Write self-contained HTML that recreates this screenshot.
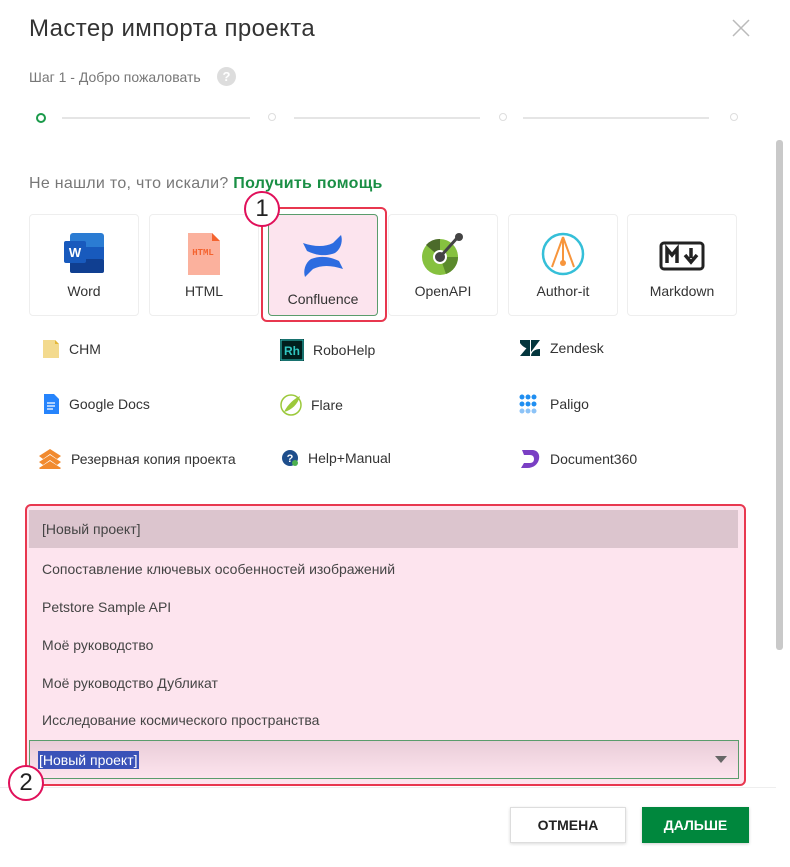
<!DOCTYPE html>
<html><head><meta charset="utf-8"><style>
body{margin:0;width:790px;height:867px;background:#fff;font-family:"Liberation Sans","Noto Sans CJK SC",sans-serif;color:#333;position:relative;overflow:hidden}
.a{position:absolute}
.tile{position:absolute;top:214px;width:110px;height:102px;border:1px solid #eee;border-radius:4px;box-sizing:border-box;text-align:center;font-size:14px;color:#333;background:#fff}
.tile .ic{position:absolute;left:0;right:0;top:16px;height:46px;display:flex;justify-content:center}
.tile .lb{position:absolute;left:0;right:0;top:68px}
.li{position:absolute;font-size:14px;color:#333;display:flex;align-items:center;gap:9px}
.row{position:absolute;left:29px;width:709px;height:38px;line-height:38px;padding-left:13px;box-sizing:border-box;font-size:14px;color:#444}
.circ{position:absolute;width:36px;height:36px;border:2px solid #e0105a;border-radius:50%;box-sizing:border-box;background:#fff;text-align:center;line-height:32px;font-size:24px;color:#222}
</style></head><body>
<div class="a" style="left:29px;top:15px;font-size:24px;color:#333;letter-spacing:0.4px">Мастер импорта проекта</div>
<svg class="a" style="left:732px;top:19px" width="18" height="18"><path d="M1 1L17 17M17 1L1 17" stroke="#bbb" stroke-width="1.5"/></svg>
<div class="a" style="left:29px;top:69px;font-size:14px;color:#777">Шаг 1 - Добро пожаловать</div>
<div class="a" style="left:217px;top:67px;width:19px;height:19px;border-radius:50%;background:#ddd;color:#fff;font-size:13px;text-align:center;line-height:19px;font-weight:bold">?</div>
<div class="a" style="left:36px;top:113px;width:6px;height:6px;border:2px solid #1a9a4a;border-radius:50%"></div>
<div class="a" style="left:62px;top:117px;width:188px;height:2px;background:#e5e5e5"></div>
<div class="a" style="left:268px;top:113px;width:6px;height:6px;border:1.5px solid #ddd;border-radius:50%"></div>
<div class="a" style="left:294px;top:117px;width:186px;height:2px;background:#e5e5e5"></div>
<div class="a" style="left:499px;top:113px;width:6px;height:6px;border:1.5px solid #ddd;border-radius:50%"></div>
<div class="a" style="left:523px;top:117px;width:186px;height:2px;background:#e5e5e5"></div>
<div class="a" style="left:730px;top:113px;width:6px;height:6px;border:1.5px solid #ddd;border-radius:50%"></div>
<div class="a" style="left:776px;top:140px;width:7px;height:510px;background:#c9c9c9;border-radius:3px"></div>
<div class="a" style="left:29px;top:175px;font-size:16px;color:#777;letter-spacing:0.3px">Не нашли то, что искали? <b style="color:#1a8f45">Получить помощь</b></div>

<div class="tile" style="left:29px"><div class="ic"><svg width="44" height="44" viewBox="0 0 44 44"><rect x="8" y="2" width="34" height="40" rx="3" fill="#2b7cd3"/><rect x="8" y="16" width="34" height="12" fill="#185abd"/><rect x="8" y="28" width="34" height="14" rx="2" fill="#103f91"/><rect x="2" y="10" width="22" height="22" rx="2" fill="#185abd"/><text x="13" y="26" font-size="13" font-weight="bold" fill="#fff" text-anchor="middle" font-family="Liberation Sans">W</text></svg></div><div class="lb">Word</div></div>
<div class="tile" style="left:149px"><div class="ic"><svg width="36" height="46" viewBox="0 0 36 46"><path d="M2 2h24l8 8v34H2z" fill="#fbb19d"/><path d="M26 2l8 8h-8z" fill="#f4632f"/><text x="17" y="24" font-size="9" font-weight="bold" fill="#f4632f" text-anchor="middle" font-family="Liberation Mono">HTML</text></svg></div><div class="lb">HTML</div></div>
<div class="a" style="left:261px;top:207px;width:126px;height:115px;border:2px solid #e8374f;border-radius:6px;box-sizing:border-box"></div>
<div class="tile" style="left:268px;background:#fce4ee;border-color:#5a9c6c"><div class="ic"><svg width="48" height="50" viewBox="0 0 48 50"><path d="M4 12c12 4 22 4 30 0l8-8c2 6 0 14-6 18-10 4-20 2-28-2z" fill="#2d6ce0"/><path d="M44 38c-12-4-22-4-30 0l-8 8c-2-6 0-14 6-18 10-4 20-2 28 2z" fill="#2d6ce0"/></svg></div><div class="lb" style="top:76px">Confluence</div></div>
<div class="tile" style="left:388px"><div class="ic"><svg width="46" height="46" viewBox="0 0 46 46"><circle cx="20" cy="26" r="18" fill="#86c13f"/><path d="M20 26L6 14A18 18 0 0 1 20 8z" fill="#4c6b2a"/><path d="M20 26L38 26A18 18 0 0 1 26 43z" fill="#5b8a2c"/><circle cx="20" cy="26" r="7" fill="#fff"/><path d="M20 26L38 6" stroke="#444" stroke-width="3"/><circle cx="39" cy="6" r="4" fill="#444"/><circle cx="20" cy="26" r="5" fill="#444"/></svg></div><div class="lb">OpenAPI</div></div>
<div class="tile" style="left:508px"><div class="ic"><svg width="46" height="46" viewBox="0 0 46 46"><circle cx="23" cy="23" r="20" fill="#fff" stroke="#35bfd8" stroke-width="2.5"/><path d="M23 6L12 36M23 6L34 36M23 6V32" stroke="#f7953c" stroke-width="2" fill="none"/><circle cx="23" cy="32" r="3" fill="#f7953c"/></svg></div><div class="lb">Author-it</div></div>
<div class="tile" style="left:627px"><div class="ic"><svg width="46" height="46" viewBox="0 0 46 46"><rect x="2" y="12" width="42" height="26" rx="3" fill="#fff" stroke="#222" stroke-width="3"/><path d="M8 32V18l5 6 5-6v14" stroke="#222" stroke-width="3.5" fill="none"/><path d="M32 17v10M26 24l6 7 6-7" stroke="#222" stroke-width="3.5" fill="none"/></svg></div><div class="lb">Markdown</div></div>

<div class="li" style="left:42px;top:339px"><svg width="18" height="20"><path d="M1 1h12l4 4v14H1z" fill="#f3da8e"/><path d="M13 1l4 4h-4z" fill="#e3b73a"/></svg>CHM</div>
<div class="li" style="left:42px;top:394px"><svg width="18" height="20"><path d="M2 0h10l5 5v15H2z" fill="#2684fc"/><path d="M5 9h8M5 12h8M5 15h6" stroke="#fff" stroke-width="1.3"/></svg>Google Docs</div>
<div class="li" style="left:38px;top:448px"><svg width="24" height="22"><path d="M12 1L23 8l-4 3-7-5-7 5-4-3z M12 7l11 7-4 3-7-5-7 5-4-3z M12 13l11 7-1 1h-20l-1-1z" fill="#f18a2e"/></svg>Резервная копия проекта</div>
<div class="li" style="left:280px;top:339px"><svg width="24" height="22"><rect width="24" height="22" fill="#001e1d"/><rect x="1" y="1" width="22" height="20" fill="none" stroke="#31c5c1"/><text x="12" y="16" font-size="12" font-weight="bold" fill="#31c5c1" text-anchor="middle" font-family="Liberation Sans">Rh</text></svg>RoboHelp</div>
<div class="li" style="left:280px;top:394px"><svg width="22" height="22"><circle cx="11" cy="11" r="10" fill="#fff" stroke="#9cc93b" stroke-width="1.5"/><path d="M4 18C8 10 14 5 20 2 18 10 12 16 4 18z" fill="#9cc93b"/></svg>Flare</div>
<div class="li" style="left:281px;top:449px"><svg width="18" height="18"><circle cx="9" cy="9" r="8" fill="#1e4e8c"/><text x="9" y="13" font-size="11" font-weight="bold" fill="#fff" text-anchor="middle">?</text><circle cx="14" cy="14" r="3" fill="#4caf50"/></svg>Help+Manual</div>
<div class="li" style="left:519px;top:339px"><svg width="22" height="18"><path d="M1 1h10v9C7 10 3 7 1 4z" fill="#03363d"/><path d="M11 17H1L11 5z" fill="#03363d"/><path d="M21 1H11l10 12z" fill="none"/><path d="M12 1h9L12 13z" fill="#03363d"/><path d="M12 17c0-4 4-7 9-7v7z" fill="#03363d"/></svg>Zendesk</div>
<div class="li" style="left:519px;top:394px"><svg width="22" height="20"><g fill="#1f8ef1"><circle cx="3" cy="3" r="2.5"/><circle cx="9" cy="3" r="2.5"/><circle cx="15" cy="3" r="2.5"/><circle cx="3" cy="10" r="2.5"/><circle cx="9" cy="10" r="2.5"/><circle cx="15" cy="10" r="2.5"/></g><g fill="#8cc3f7"><circle cx="3" cy="17" r="2.5"/><circle cx="9" cy="17" r="2.5"/><circle cx="15" cy="17" r="2.5"/></g></svg>Paligo</div>
<div class="li" style="left:519px;top:448px"><svg width="22" height="22"><path d="M3 2h10c6 0 8 5 7 9-1 5-5 9-12 9H2l3-5h6c3 0 4-2 4-4s-1-4-4-4H5z" fill="#7a3fc4"/></svg>Document360</div>

<div class="a" style="left:25px;top:504px;width:721px;height:282px;border:2px solid #e8374f;border-radius:6px;box-sizing:border-box;background:#fde4ee"></div>
<div class="row" style="top:510px;background:#dcc5ce">[Новый проект]</div>
<div class="row" style="top:550px">Сопоставление ключевых особенностей изображений</div>
<div class="row" style="top:588px">Petstore Sample API</div>
<div class="row" style="top:626px">Моё руководство</div>
<div class="row" style="top:664px">Моё руководство Дубликат</div>
<div class="row" style="top:701px">Исследование космического пространства</div>
<div class="a" style="left:29px;top:740px;width:710px;height:39px;border:1px solid #5a9c6c;box-sizing:border-box;background:linear-gradient(#e9cdd8,#fde4ee)"></div>
<div class="a" style="left:38px;top:751px;font-size:14px;background:#3a52b8;color:#fff;padding:0 1px;line-height:18px">[Новый проект]</div>
<svg class="a" style="left:715px;top:755px" width="12" height="9"><path d="M0 1h12L6 8z" fill="#666"/></svg>
<div class="a" style="left:0;top:787px;width:776px;height:1px;background:#eee"></div>
<div class="circ" style="left:8px;top:765px">2</div>
<div class="circ" style="left:244px;top:191px">1</div>
<div class="a" style="left:510px;top:807px;width:116px;height:36px;border:1px solid #ddd;box-sizing:border-box;box-shadow:0 1px 3px rgba(0,0,0,.15);text-align:center;line-height:34px;font-size:14px;font-weight:bold;color:#222">ОТМЕНА</div>
<div class="a" style="left:642px;top:807px;width:107px;height:36px;background:#00873d;box-shadow:0 1px 3px rgba(0,0,0,.2);text-align:center;line-height:36px;font-size:14px;font-weight:bold;color:#fff">ДАЛЬШЕ</div>
</body></html>
